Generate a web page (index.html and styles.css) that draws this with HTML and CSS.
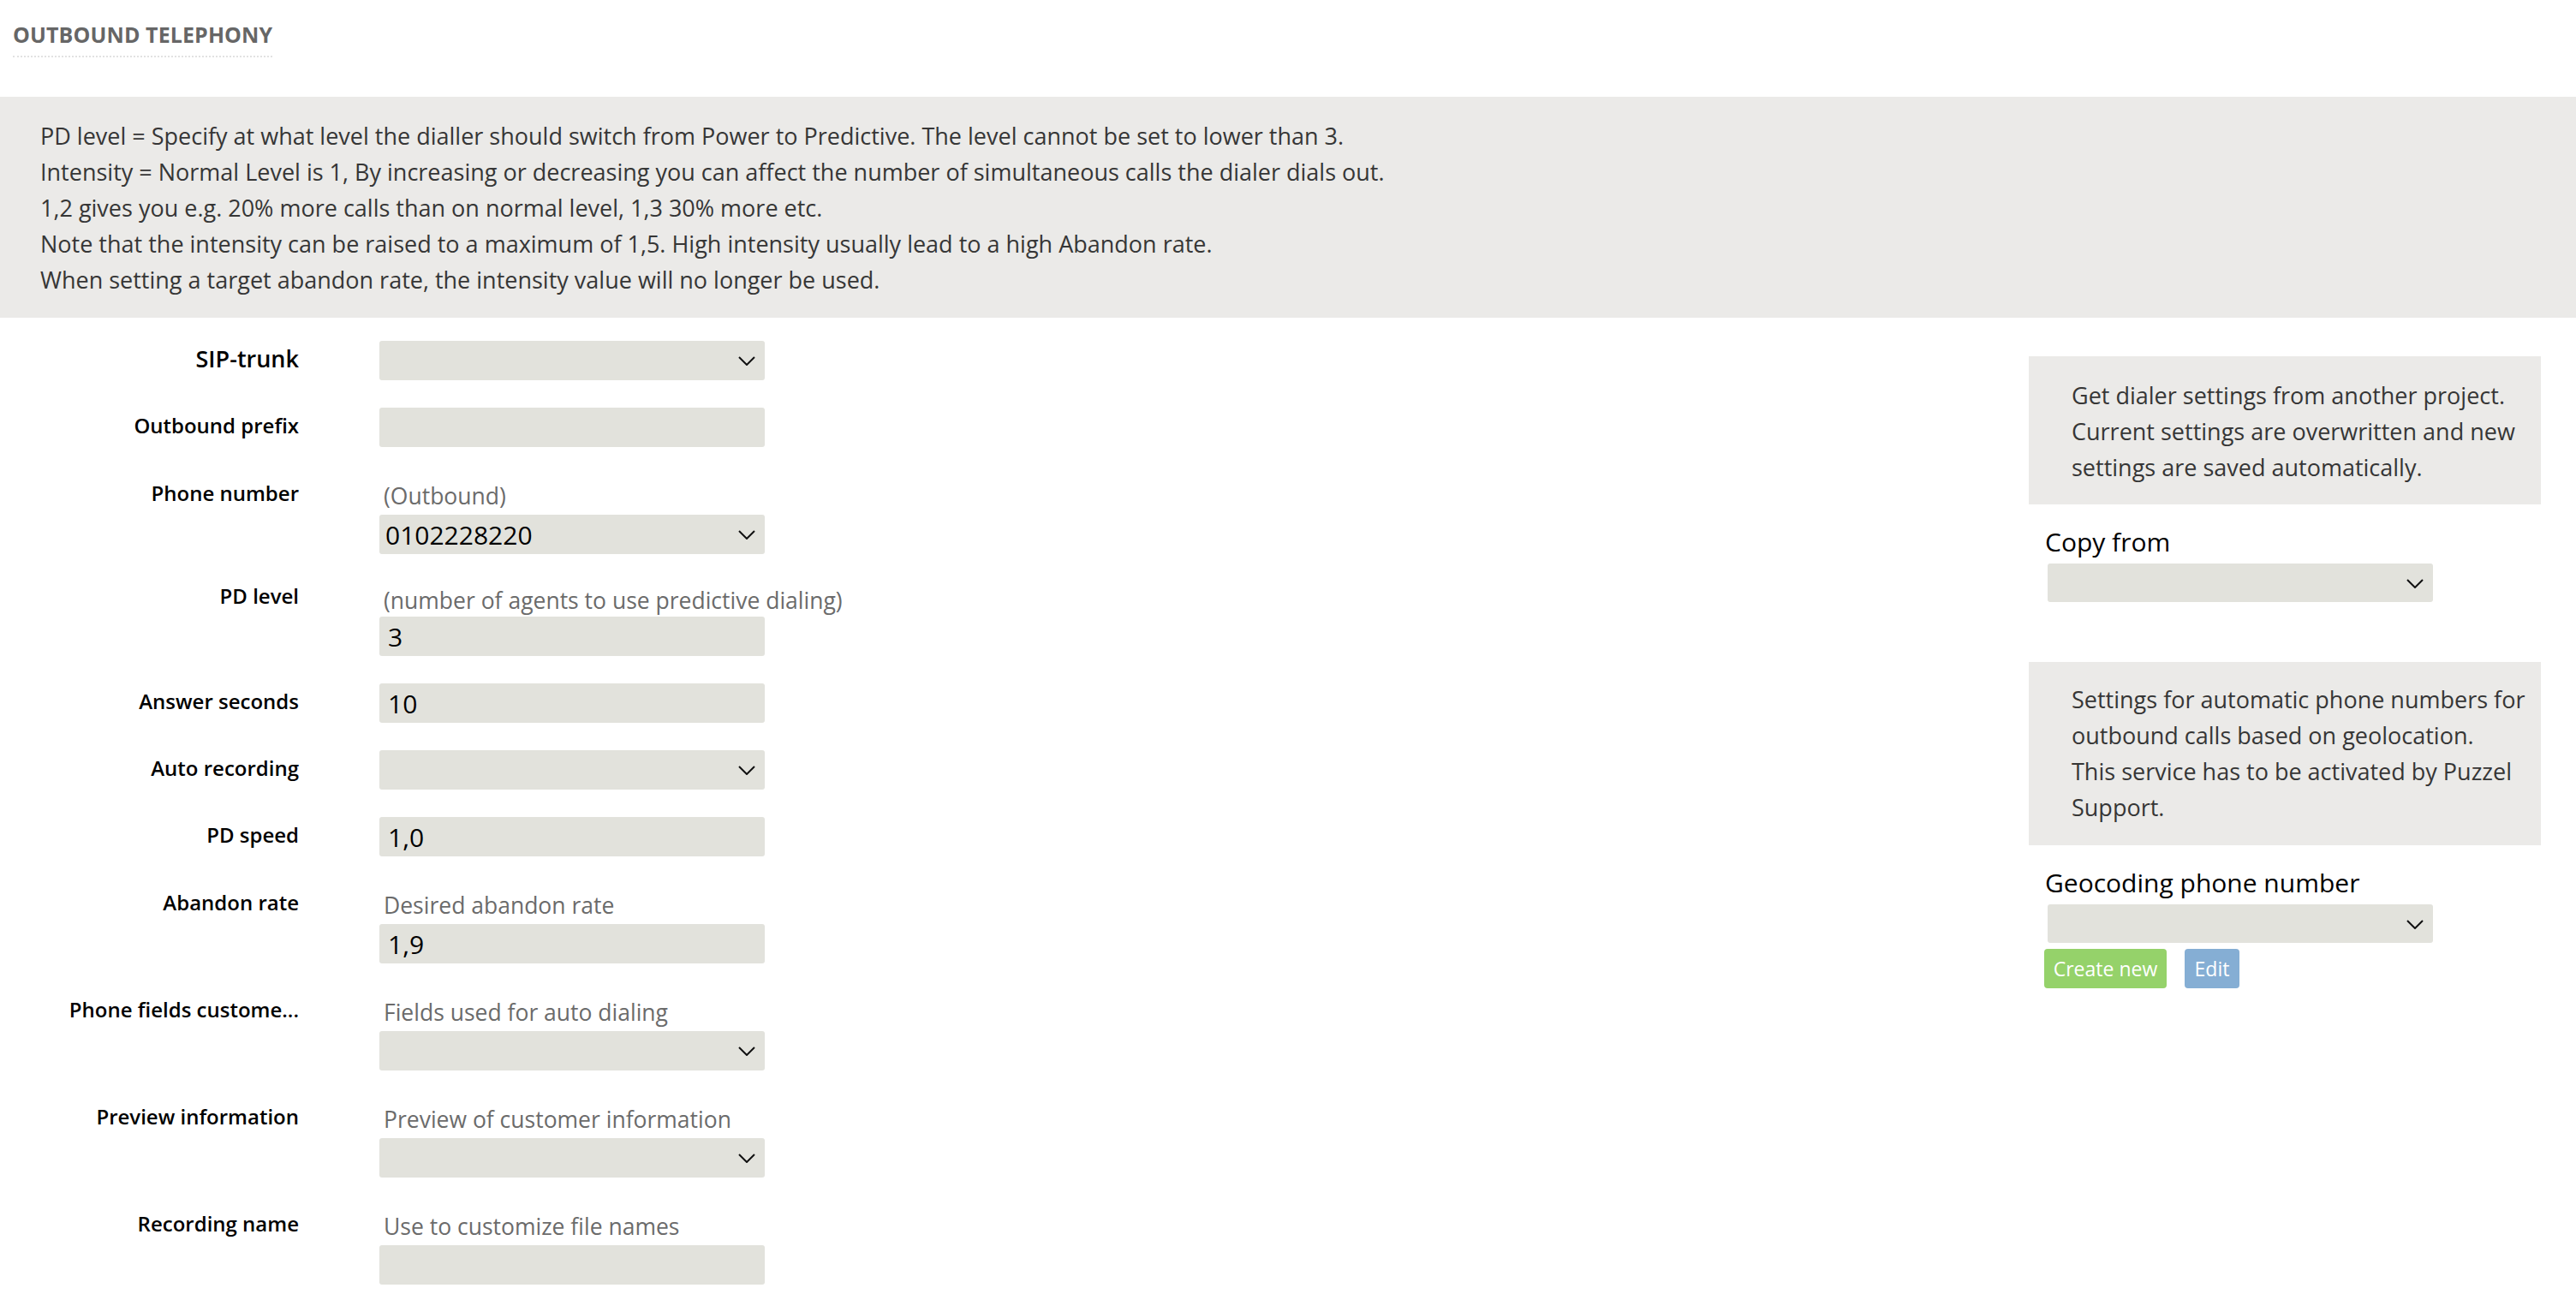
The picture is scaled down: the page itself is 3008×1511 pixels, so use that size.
FILE: index.html
```html
<!DOCTYPE html>
<html lang="en">
<head>
<meta charset="utf-8">
<title>Outbound telephony</title>
<link rel="stylesheet" href="styles.css">
</head>
<body>
<header class="page-head">
  <h1 class="title">OUTBOUND TELEPHONY</h1>
</header>

<section class="info">
  <p>PD level = Specify at what level the dialler should switch from Power to Predictive. The level cannot be set to lower than 3.</p>
  <p>Intensity = Normal Level is 1, By increasing or decreasing you can affect the number of simultaneous calls the dialer dials out.</p>
  <p>1,2 gives you e.g. 20% more calls than on normal level, 1,3 30% more etc.</p>
  <p>Note that the intensity can be raised to a maximum of 1,5. High intensity usually lead to a high Abandon rate.</p>
  <p>When setting a target abandon rate, the intensity value will no longer be used.</p>
</section>

<main class="content">
  <form class="form">
    <div class="row">
      <label class="label label-lg">SIP-trunk</label>
      <div class="field">
        <div class="select"><select class="control"><option></option></select><svg class="chev" viewBox="0 0 20 11"><path d="M1 1 L10 10 L19 1" /></svg></div>
      </div>
    </div>
    <div class="row">
      <label class="label">Outbound prefix</label>
      <div class="field"><input class="control" type="text" value=""></div>
    </div>
    <div class="row">
      <label class="label label-help">Phone number</label>
      <div class="field">
        <div class="help">(Outbound)</div>
        <div class="select"><select class="control"><option>0102228220</option></select><svg class="chev" viewBox="0 0 20 11"><path d="M1 1 L10 10 L19 1" /></svg></div>
      </div>
    </div>
    <div class="row">
      <label class="label label-help label-tight">PD level</label>
      <div class="field">
        <div class="help help-tight">(number of agents to use predictive dialing)</div>
        <input class="control" type="text" value="3">
      </div>
    </div>
    <div class="row">
      <label class="label">Answer seconds</label>
      <div class="field"><input class="control" type="text" value="10"></div>
    </div>
    <div class="row">
      <label class="label">Auto recording</label>
      <div class="field">
        <div class="select"><select class="control"><option></option></select><svg class="chev" viewBox="0 0 20 11"><path d="M1 1 L10 10 L19 1" /></svg></div>
      </div>
    </div>
    <div class="row">
      <label class="label">PD speed</label>
      <div class="field"><input class="control" type="text" value="1,0"></div>
    </div>
    <div class="row">
      <label class="label label-help">Abandon rate</label>
      <div class="field">
        <div class="help">Desired abandon rate</div>
        <input class="control" type="text" value="1,9">
      </div>
    </div>
    <div class="row">
      <label class="label label-help">Phone fields custome...</label>
      <div class="field">
        <div class="help">Fields used for auto dialing</div>
        <div class="select"><select class="control"><option></option></select><svg class="chev" viewBox="0 0 20 11"><path d="M1 1 L10 10 L19 1" /></svg></div>
      </div>
    </div>
    <div class="row">
      <label class="label label-help">Preview information</label>
      <div class="field">
        <div class="help">Preview of customer information</div>
        <div class="select"><select class="control"><option></option></select><svg class="chev" viewBox="0 0 20 11"><path d="M1 1 L10 10 L19 1" /></svg></div>
      </div>
    </div>
    <div class="row">
      <label class="label label-help">Recording name</label>
      <div class="field">
        <div class="help">Use to customize file names</div>
        <input class="control" type="text" value="">
      </div>
    </div>
  </form>

  <aside class="side">
    <div class="note">Get dialer settings from another project.<br>Current settings are overwritten and new<br>settings are saved automatically.</div>
    <div class="side-label">Copy from</div>
    <div class="select select-side"><select class="control"><option></option></select><svg class="chev" viewBox="0 0 20 11"><path d="M1 1 L10 10 L19 1" /></svg></div>

    <div class="note note-geo">Settings for automatic phone numbers for<br>outbound calls based on geolocation.<br>This service has to be activated by Puzzel<br>Support.</div>
    <div class="side-label">Geocoding phone number</div>
    <div class="select select-side"><select class="control"><option></option></select><svg class="chev" viewBox="0 0 20 11"><path d="M1 1 L10 10 L19 1" /></svg></div>
    <div class="buttons">
      <button class="btn btn-green" type="button">Create new</button>
      <button class="btn btn-blue" type="button">Edit</button>
    </div>
  </aside>
</main>
</body>
</html>
```

FILE: styles.css
```css
html, body {
  margin: 0;
  padding: 0;
  background: #ffffff;
}

body {
  font-family: "Open Sans", "Noto Sans", "DejaVu Sans", sans-serif;
  color: #333333;
  font-size: 26px;
}

.page-head {
  padding: 22px 0 0 15px;
  height: 113px;
  box-sizing: border-box;
}

.title {
  display: inline-block;
  margin: 0;
  font-size: 25px;
  font-weight: 700;
  line-height: 34px;
  color: #666666;
  padding-bottom: 8px;
  border-bottom: 2px dotted #e2e2e2;
  letter-spacing: 0.1px;
}

.info {
  background: #ebeae8;
  padding: 25px 20px 23px 47px;
  font-size: 27px;
  line-height: 42px;
  color: #363636;
}

.info p {
  margin: 0;
}

.content {
  display: flex;
  justify-content: space-between;
  align-items: flex-start;
  padding: 27px 41px 0 0;
}

.form {
  display: flex;
  flex-direction: column;
  gap: 32px;
}

.row {
  display: grid;
  grid-template-columns: 349px 450px;
  column-gap: 94px;
  align-items: start;
}

.label {
  text-align: right;
  font-weight: 600;
  font-size: 24px;
  line-height: 30px;
  padding-top: 6px;
  color: #000000;
  white-space: nowrap;
}

.label-lg {
  font-size: 27px;
  padding-top: 6px;
}

.label-help {
  padding-top: 7px;
}

.label-tight {
  padding-top: 2px;
}

.field {
  display: flex;
  flex-direction: column;
}

.help {
  padding: 4px 0 1px 5px;
  font-size: 26.5px;
  line-height: 42px;
  color: #6b6b6b;
  white-space: nowrap;
}

.help-tight {
  line-height: 36px;
  padding-top: 4px;
}

.control {
  box-sizing: border-box;
  width: 450px;
  height: 46px;
  margin: 0;
  border: none;
  border-radius: 3px;
  background: #e2e2dc;
  font-family: "Open Sans", "Noto Sans", sans-serif;
  font-size: 30px;
  color: #000000;
  padding: 0 40px 0 10px;
  outline: none;
  appearance: none;
  -webkit-appearance: none;
}

.select {
  position: relative;
  width: 450px;
}

.select .control {
  display: block;
  padding-left: 7px;
}

.chev {
  position: absolute;
  right: 11px;
  top: 18px;
  width: 20px;
  height: 11px;
  fill: none;
  stroke: #111111;
  stroke-width: 2;
  pointer-events: none;
}

.side {
  width: 598px;
  margin-top: 18px;
  display: flex;
  flex-direction: column;
}

.note {
  background: #ebeae8;
  padding: 25px 10px 22px 50px;
  font-size: 27px;
  line-height: 42px;
  color: #363636;
}

.note-geo {
  margin-top: 70px;
  padding-top: 23px;
  padding-bottom: 23px;
}

.side-label {
  margin: 22px 0 3px 19px;
  font-size: 30px;
  line-height: 44px;
  color: #000000;
}

.select-side {
  margin-left: 22px;
}

.select-side .control {
  height: 45px;
}

.buttons {
  display: flex;
  gap: 21px;
  margin: 7px 0 0 18px;
}

.btn {
  height: 46px;
  border: none;
  border-radius: 4px;
  padding: 0;
  font-family: "Open Sans", "Noto Sans", sans-serif;
  font-size: 23px;
  color: #ffffff;
  white-space: nowrap;
  cursor: pointer;
}

.btn-green {
  background: #95d26a;
  width: 143px;
}

.btn-blue {
  background: #85aed4;
  width: 64px;
}
```
